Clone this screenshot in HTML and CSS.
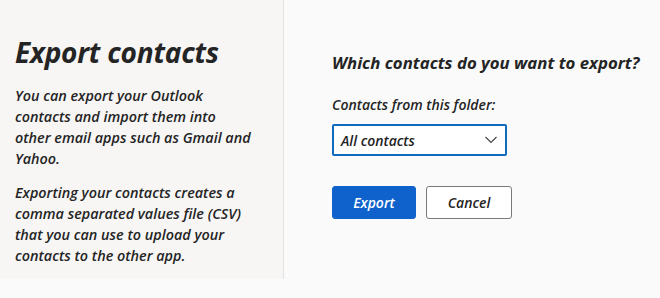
FILE: index.html
```html
<!DOCTYPE html>
<html>
<head>
<meta charset="utf-8">
<link rel="stylesheet" href="styles.css">
</head>
<body>
<div class="page">
  <aside class="side">
    <h1 class="title">Export contacts</h1>
    <p class="text">You can export your Outlook contacts and import them into other email apps such as Gmail and Yahoo.</p>
    <p class="text">Exporting your contacts creates a comma separated values file (CSV) that you can use to upload your contacts to the other app.</p>
  </aside>
  <main class="main">
    <h2 class="question">Which contacts do you want to export?</h2>
    <div class="label">Contacts from this folder:</div>
    <div class="select">
      <span>All contacts</span>
      <svg class="chev" width="12" height="8" viewBox="0 0 12 8"><path d="M0.5 1 L6 6.5 L11.5 1" fill="none" stroke="#444" stroke-width="1.1"/></svg>
    </div>
    <div class="actions">
      <button class="btn primary">Export</button>
      <button class="btn">Cancel</button>
    </div>
  </main>
</div>
</body>
</html>
```
FILE: styles.css
```css
html, body {
  margin: 0;
  padding: 0;
  background: #fafafa;
}
body {
  font-family: "Open Sans", "Noto Sans", sans-serif;
  font-style: italic;
  font-weight: 600;
  color: #242424;
  width: 660px;
  height: 298px;
  overflow: hidden;
}
.page {
  display: flex;
  align-items: flex-start;
}
.side {
  width: 284px;
  height: 279px;
  box-sizing: border-box;
  padding: 34px 0 0 15px;
  background: #f7f6f5;
  border-right: 1px solid #e4e2e0;
}
.title {
  margin: 0 0 15px;
  font-size: 28px;
  font-weight: 700;
  line-height: 36px;
  letter-spacing: -0.2px;
}
.text {
  margin: 0 0 13px;
  font-size: 14.4px;
  line-height: 21px;
  width: 238px;
}
.main {
  padding: 51px 0 0 48px;
}
.question {
  margin: 0 0 20px;
  font-size: 16.8px;
  font-weight: 700;
  line-height: 24px;
}
.label {
  font-size: 14px;
  line-height: 19px;
  margin-bottom: 10px;
}
.select {
  width: 175px;
  height: 32px;
  box-sizing: border-box;
  border: 2px solid #0f6cbd;
  border-radius: 2px;
  background: #fff;
  display: flex;
  align-items: center;
  justify-content: space-between;
  padding: 0 8px 0 7px;
  font-size: 14px;
}
.actions {
  display: flex;
  gap: 10px;
  margin-top: 30px;
}
.btn {
  font: inherit;
  font-size: 14px;
  height: 33px;
  width: 86px;
  border-radius: 3px;
  border: 1px solid #7a7a7a;
  background: #fff;
  color: #242424;
  padding: 0;
}
.btn.primary {
  width: 84px;
  background: #0f62cb;
  border-color: #0f62cb;
  color: #fff;
}
```
